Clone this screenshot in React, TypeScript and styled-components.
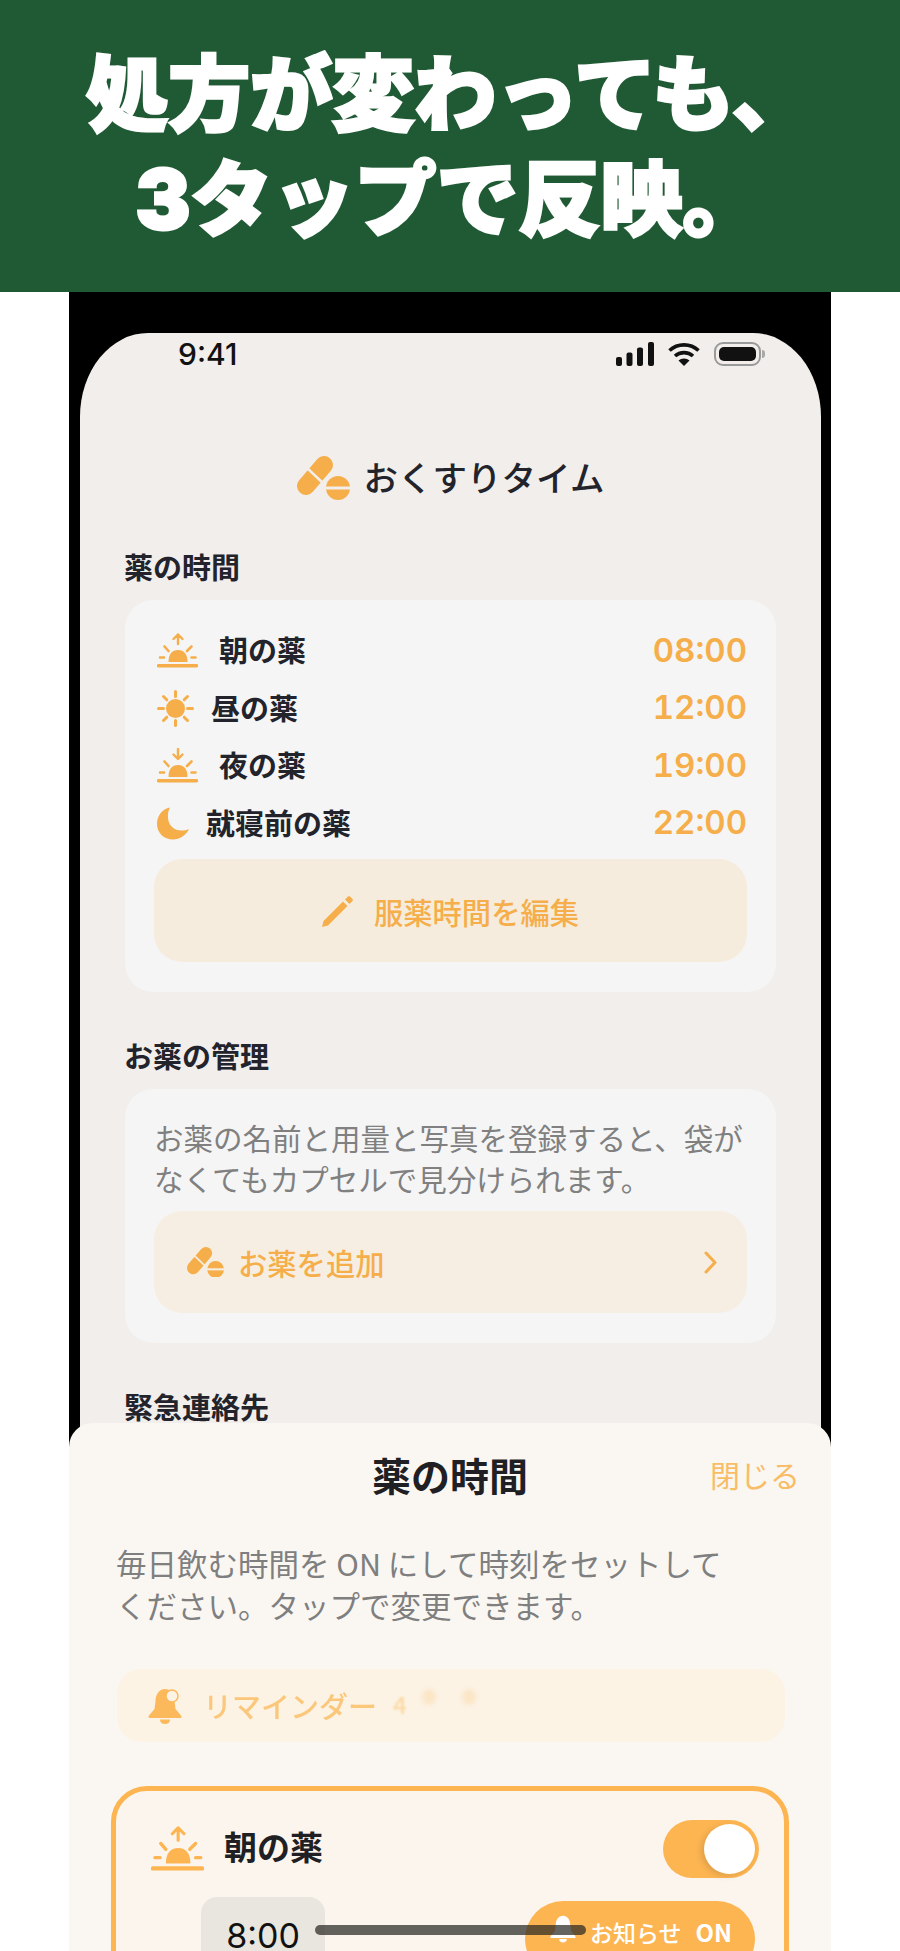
import React from 'react';
import styled, { createGlobalStyle } from 'styled-components';

const ORANGE = '#f5ae4a';
const BRIGHT = '#fdb552';
const JP = `"Noto Sans CJK JP", "Noto Sans", sans-serif`;

const GlobalStyle = createGlobalStyle`
  html, body {
    margin: 0;
    padding: 0;
    background: #fff;
    font-family: ${JP};
  }
  * { box-sizing: border-box; }
`;

const Page = styled.div`
  width: 900px;
  height: 1951px;
  display: flex;
  flex-direction: column;
  overflow: hidden;
`;

const Banner = styled.header`
  height: 292px;
  flex: none;
  background: #205a34;
  padding-top: 42px;
`;

const Headline = styled.h1`
  margin: 0;
  color: #fff;
  font-family: Inter, ${JP};
  font-size: 82px;
  line-height: 105px;
  font-weight: 900;
  text-align: center;
  white-space: nowrap;
  -webkit-text-stroke: 3px #fff;
`;

const PhoneFrame = styled.div`
  position: relative;
  flex: 1;
  margin: 0 69px;
  padding: 41px 10px 0 11px;
  background: #000;
`;

const Screen = styled.div`
  height: 100%;
  background: #f1eeeb;
  border-radius: 68px 68px 0 0 / 84px 84px 0 0;
  overflow: hidden;
`;

const StatusBar = styled.div`
  height: 42px;
  padding: 0 60px 0 98px;
  display: flex;
  align-items: center;
  justify-content: space-between;
`;

const Clock = styled.span`
  font-family: Inter, sans-serif;
  font-size: 30px;
  font-weight: 500;
  color: #111;
`;

const StatusIcons = styled.div`
  display: flex;
  align-items: center;
  gap: 14px;
`;

const Battery = styled.div`
  position: relative;
  width: 47px;
  height: 24px;
  padding: 3px;
  border: 2px solid #9a9a9a;
  border-radius: 9px;
  background: #f1eeeb;

  &::before {
    content: '';
    display: block;
    height: 100%;
    background: #111;
    border-radius: 5px;
  }

  &::after {
    content: '';
    position: absolute;
    right: -6px;
    top: 6px;
    width: 3px;
    height: 8px;
    background: #a8a8a8;
    border-radius: 0 3px 3px 0;
  }
`;

const AppTitleRow = styled.div`
  margin-top: 80px;
  height: 46px;
  display: flex;
  align-items: center;
  justify-content: center;
  gap: 14px;
`;

const AppTitle = styled.span`
  font-size: 34.5px;
  font-weight: 500;
  color: #23232b;
  padding-bottom: 4px;
`;

const Content = styled.div`
  margin-top: 49px;
  padding: 0 45px;
  display: flex;
  flex-direction: column;
  gap: 47px;
`;

const SectionTitle = styled.h2`
  margin: 0 0 16px -1px;
  height: 34px;
  font-size: 29px;
  line-height: 32px;
  font-weight: 600;
  color: #23232b;
`;

const Card = styled.div`
  background: #f5f5f5;
  border-radius: 28px;
  padding: 22px 29px 30px;
`;

const TimeRow = styled.div<{ $gap: number }>`
  height: 57.5px;
  display: flex;
  align-items: center;
  gap: ${p => p.$gap}px;
`;

const RowIcon = styled.span`
  display: flex;
  margin-left: 3px;
`;

const RowLabel = styled.span`
  flex: 1;
  font-size: 29px;
  font-weight: 600;
  color: #23232b;
  padding-bottom: 3px;
`;

const RowTime = styled.span`
  font-family: Inter, sans-serif;
  font-size: 33px;
  font-weight: 600;
  font-variant-numeric: tabular-nums;
  color: ${ORANGE};
  padding-bottom: 2px;
`;

const EditButton = styled.div`
  margin-top: 7px;
  height: 103px;
  border-radius: 28px;
  background: #f6ecde;
  display: flex;
  align-items: center;
  justify-content: center;
  gap: 20px;
  color: ${ORANGE};
  font-size: 29.3px;
  font-weight: 500;
`;

const CardText = styled.p`
  margin: 0;
  font-size: 29.5px;
  line-height: 41px;
  color: #808080;
  white-space: nowrap;
`;

const ClippedCard = styled(Card)`
  padding-top: 28px;
`;

const AddButton = styled.div`
  margin-top: 12px;
  height: 102px;
  padding: 0 30px 0 33px;
  border-radius: 28px;
  background: #f6eee2;
  display: flex;
  align-items: center;
  gap: 14px;
  color: ${ORANGE};
  font-size: 29.3px;
  font-weight: 500;
`;

const AddLabel = styled.span`
  flex: 1;
`;

const Sheet = styled.section`
  position: absolute;
  top: 1131px;
  left: 0;
  right: 0;
  bottom: 0;
  padding: 23px 42px 0;
  background: #faf7f3;
  border-radius: 24px 24px 0 0;
  overflow: hidden;
`;

const SheetHeader = styled.div`
  height: 52px;
  display: grid;
  grid-template-columns: 1fr auto 1fr;
  align-items: center;
`;

const SheetTitle = styled.h2`
  grid-column: 2;
  margin: 0;
  font-size: 39px;
  font-weight: 600;
  color: #1f1f24;
`;

const CloseLink = styled.span`
  justify-self: end;
  margin-right: -11px;
  font-size: 30px;
  color: #f8bd66;
`;

const SheetText = styled.p`
  margin: 44px 0 0 5px;
  font-size: 30.5px;
  line-height: 42px;
  color: #7f7f7f;
  white-space: nowrap;
`;

const ReminderBar = styled.div`
  margin: 43px 4px 0 6px;
  height: 73px;
  padding-left: 31px;
  border-radius: 24px;
  background: #fcf3e5;
  display: flex;
  align-items: center;
  gap: 21px;
`;

const ReminderText = styled.span`
  font-size: 29px;
  font-weight: 500;
  color: #fbc77a;
  filter: blur(0.6px);
  padding-bottom: 2px;
`;

const ReminderCount = styled.span`
  margin: 0 0 4px -5px;
  font-size: 24px;
  font-weight: 500;
  color: #fbd9a4;
  filter: blur(0.8px);
`;

const FadedDot = styled.span<{ $gap: number }>`
  width: 14px;
  height: 16px;
  margin-left: ${p => p.$gap}px;
  margin-bottom: 18px;
  border-radius: 50%;
  background: #fbe6c6;
  filter: blur(2px);
`;

const DoseCard = styled.div`
  margin-top: 44px;
  height: 260px;
  padding: 29px 25px 0 35px;
  border: 5px solid ${BRIGHT};
  border-radius: 36px;
  background: #fbf5ee;
`;

const DoseHeader = styled.div`
  height: 58px;
  display: flex;
  align-items: center;
  gap: 20px;
`;

const DoseName = styled.span`
  flex: 1;
  font-size: 33px;
  font-weight: 600;
  color: #1f1f24;
  padding-bottom: 6px;
`;

const Toggle = styled.div`
  width: 96px;
  height: 58px;
  padding: 4px;
  border-radius: 29px;
  background: ${BRIGHT};
  display: flex;
  justify-content: flex-end;

  &::after {
    content: '';
    width: 51px;
    height: 50px;
    border-radius: 50%;
    background: #fff;
    box-shadow: -3px 2px 6px rgba(0, 0, 0, 0.12);
  }
`;

const DoseControls = styled.div`
  margin-top: 19px;
  padding: 0 4px 0 50px;
  display: flex;
  align-items: flex-start;
  justify-content: space-between;
`;

const TimeBox = styled.div`
  width: 124px;
  height: 84px;
  border-radius: 16px;
  background: #e9e6df;
  display: flex;
  justify-content: center;
  padding-top: 25px;
  font-family: Inter, sans-serif;
  font-size: 34px;
  line-height: 28px;
  color: #111;
`;

const NotifyPill = styled.div`
  margin-top: 4px;
  width: 230px;
  height: 76px;
  padding: 14px 0 0 25px;
  border-radius: 38px;
  background: ${BRIGHT};
  display: flex;
  align-items: flex-start;
  gap: 14px;
  color: #fff;
  font-size: 23px;
  line-height: 34px;
  font-weight: 500;
`;

const PillOn = styled.b`
  margin-left: 14px;
  font-size: 24px;
  font-weight: 700;
`;

const HomeIndicator = styled.div`
  position: absolute;
  left: 246px;
  bottom: 16px;
  width: 271px;
  height: 10px;
  border-radius: 5px;
  background: rgba(40, 40, 36, 0.72);
`;

const PillLogo = ({ w, gap }: { w: number; gap: string }) => (
  <svg width={w} viewBox="0 0 53 44" fill="none">
    <line x1="9" y1="30" x2="27" y2="9" stroke={ORANGE} strokeWidth="18" strokeLinecap="round" />
    <line x1="9" y1="11" x2="27" y2="28" stroke={gap} strokeWidth="2.5" />
    <circle cx="41" cy="32" r="12" fill={ORANGE} />
    <rect x="28" y="30.5" width="26" height="3" fill={gap} />
  </svg>
);

const Horizon = ({ w, color, down }: { w: number; color: string; down?: boolean }) => (
  <svg width={w} viewBox="0 0 41 35" fill="none" stroke={color} strokeWidth="3" strokeLinecap="round" strokeLinejoin="round">
    <line x1="1.5" y1="32.8" x2="39.5" y2="32.8" strokeWidth="3.4" />
    <path d="M11.5 29C11.5 21 15 17 21 17S30.5 21 30.5 29Z" fill={color} stroke="none" />
    <path d="M3 24.5H7M34.5 24.5H38.5M7.5 13.5L11.5 18M34.5 13.5L30 18" strokeWidth="2.6" />
    {down ? <path d="M21 1V10.5M16.5 6.5L21 11L25.5 6.5" strokeWidth="2.4" /> : <path d="M21 11V1.5M16.5 6L21 1.5L25.5 6" strokeWidth="2.4" />}
  </svg>
);

const Sun = () => (
  <svg width="37" viewBox="0 0 37 37" fill="none" stroke={ORANGE} strokeWidth="3" strokeLinecap="round">
    <circle cx="18.5" cy="18.5" r="9.5" fill={ORANGE} stroke="none" />
    <path d="M18.5 1.5V6.5M18.5 30.5V35.5M1.5 18.5H6.5M30.5 18.5H35.5M6.5 6.5L9.8 9.8M27.2 27.2L30.5 30.5M30.5 6.5L27.2 9.8M9.8 27.2L6.5 30.5" />
  </svg>
);

const Moon = () => (
  <svg width="32" viewBox="0 0 32 33" fill={ORANGE}>
    <path d="M13 0.5C5 2 0 9 0 17C0 26 7 32.5 16 32.5C23 32.5 29 28 32 22C22 26 12 22 11 11C10.5 7 11.5 3 13 0.5Z" />
  </svg>
);

const Pencil = () => (
  <svg width="32" viewBox="0 0 32 32" fill={ORANGE}>
    <path d="M0 32L1.5 26L21 6.5L25.5 11L6 30.5Z" />
    <path d="M23 4.5L26 1.5Q27 0.5 28 1.5L30.5 4Q31.5 5 30.5 6L27.5 9Z" />
  </svg>
);

const Chevron = () => (
  <svg width="13" viewBox="0 0 13 23" fill="none" stroke={ORANGE} strokeWidth="3" strokeLinecap="round" strokeLinejoin="round">
    <polyline points="2,2 11,11.5 2,21" />
  </svg>
);

const Bell = ({ w, color, badge }: { w: number; color: string; badge?: string }) => (
  <svg width={w} viewBox="0 0 34 36" fill={color}>
    <path d="M17 1C11 1 7.5 7 7.5 13L6.5 21L1 27.5Q-0.5 30 2 30H32Q34.5 30 33 27.5L27.5 21L26.5 13C26.5 7 23 1 17 1Z" />
    <path d="M12 31.5H22C22 34.5 20 36 17 36S12 34.5 12 31.5Z" />
    {badge && <circle cx="24" cy="8" r="6" fill={badge} stroke={color} strokeWidth="1.5" />}
  </svg>
);

const StatusGlyphs = () => (
  <StatusIcons>
    <svg width="38" viewBox="0 0 38 24" fill="#111">
      <rect x="0" y="15" width="6" height="9" rx="2" />
      <rect x="10.5" y="10.5" width="6" height="13.5" rx="2" />
      <rect x="21" y="5.5" width="6" height="18.5" rx="2" />
      <rect x="32" y="0" width="6" height="24" rx="2" />
    </svg>
    <svg width="32" viewBox="0 0 32 24" fill="none" stroke="#111" strokeWidth="3.6">
      <path d="M1.5 8.5C9.5 1 22.5 1 30.5 8.5" />
      <path d="M7 14C12 9.5 20 9.5 25 14" />
      <path d="M16 24L10.5 18.5C13.5 15.8 18.5 15.8 21.5 18.5Z" fill="#111" stroke="none" />
    </svg>
    <Battery />
  </StatusIcons>
);

const times = [
  { label: '朝の薬', time: '08:00', gap: 21, icon: <Horizon w={41} color={ORANGE} /> },
  { label: '昼の薬', time: '12:00', gap: 17, icon: <Sun /> },
  { label: '夜の薬', time: '19:00', gap: 21, icon: <Horizon w={41} color={ORANGE} down /> },
  { label: '就寝前の薬', time: '22:00', gap: 17, icon: <Moon /> },
];

const App = () => (
  <Page>
    <GlobalStyle />
    <Banner>
      <Headline>
        処方が変わっても、
        <br />
        3タップで反映。
      </Headline>
    </Banner>
    <PhoneFrame>
      <Screen>
        <StatusBar>
          <Clock>9:41</Clock>
          <StatusGlyphs />
        </StatusBar>
        <AppTitleRow>
          <PillLogo w={53} gap="#f1eeeb" />
          <AppTitle>おくすりタイム</AppTitle>
        </AppTitleRow>
        <Content>
          <div>
            <SectionTitle>薬の時間</SectionTitle>
            <Card>
              {times.map(row => (
                <TimeRow key={row.label} $gap={row.gap}>
                  <RowIcon>{row.icon}</RowIcon>
                  <RowLabel>{row.label}</RowLabel>
                  <RowTime>{row.time}</RowTime>
                </TimeRow>
              ))}
              <EditButton>
                <Pencil />
                服薬時間を編集
              </EditButton>
            </Card>
          </div>
          <div>
            <SectionTitle>お薬の管理</SectionTitle>
            <ClippedCard>
              <CardText>
                お薬の名前と用量と写真を登録すると、袋が
                <br />
                なくてもカプセルで見分けられます。
              </CardText>
              <AddButton>
                <PillLogo w={37} gap="#f6eee2" />
                <AddLabel>お薬を追加</AddLabel>
                <Chevron />
              </AddButton>
            </ClippedCard>
          </div>
          <div>
            <SectionTitle>緊急連絡先</SectionTitle>
          </div>
        </Content>
      </Screen>
      <Sheet>
        <SheetHeader>
          <SheetTitle>薬の時間</SheetTitle>
          <CloseLink>閉じる</CloseLink>
        </SheetHeader>
        <SheetText>
          毎日飲む時間を ON にして時刻をセットして
          <br />
          ください。タップで変更できます。
        </SheetText>
        <ReminderBar>
          <Bell w={34} color="#fcb95c" badge="#fcf3e5" />
          <ReminderText>リマインダー</ReminderText>
          <ReminderCount>4</ReminderCount>
          <FadedDot $gap={-6} />
          <FadedDot $gap={5} />
        </ReminderBar>
        <DoseCard>
          <DoseHeader>
            <Horizon w={53} color={BRIGHT} />
            <DoseName>朝の薬</DoseName>
            <Toggle />
          </DoseHeader>
          <DoseControls>
            <TimeBox>8:00</TimeBox>
            <NotifyPill>
              <Bell w={26} color="#fff" />
              <span>
                お知らせ<PillOn>ON</PillOn>
              </span>
            </NotifyPill>
          </DoseControls>
        </DoseCard>
        <HomeIndicator />
      </Sheet>
    </PhoneFrame>
  </Page>
);

export default App;
